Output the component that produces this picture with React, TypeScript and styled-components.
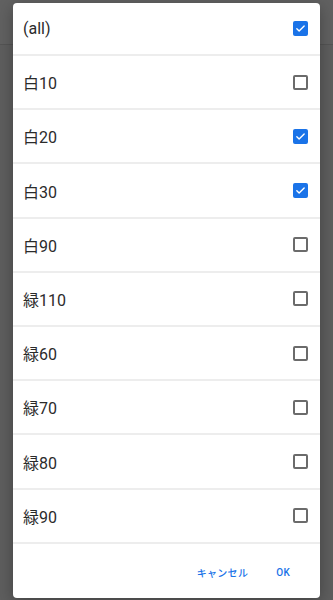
import React, { useState } from "react";
import styled, { createGlobalStyle } from "styled-components";

const GlobalStyle = createGlobalStyle`
  html, body {
    margin: 0;
    padding: 0;
    height: 100%;
    background: #ffffff;
    font-family: Roboto, "Noto Sans CJK JP", sans-serif;
  }
  #root {
    height: 100%;
  }
`;

const Page = styled.div`
  position: relative;
  width: 333px;
  height: 600px;
  overflow: hidden;
  background: #f7f7f7;
`;

const PageHeader = styled.div`
  height: 44px;
  background: #ffffff;
  border-bottom: 1px solid #dddddd;
`;

const Backdrop = styled.div`
  position: absolute;
  inset: 0;
  background: rgba(0, 0, 0, 0.62);
  display: flex;
  align-items: center;
  justify-content: center;
`;

const Dialog = styled.div`
  width: 307px;
  height: 595px;
  background: #ffffff;
  border-radius: 4px;
  box-shadow: 0 4px 16px rgba(0, 0, 0, 0.3);
  display: flex;
  flex-direction: column;
  overflow: hidden;
`;

const List = styled.div`
  display: flex;
  flex-direction: column;
`;

const Row = styled.label<{ $first?: boolean }>`
  box-sizing: border-box;
  height: ${(p) => (p.$first ? "53.6px" : "54.2px")};
  display: flex;
  align-items: center;
  justify-content: space-between;
  padding: ${(p) => (p.$first ? "1px" : "0")} 12px 0 10px;
  border-bottom: 2px solid #ededed;
  font-size: 16px;
  color: #2b2b2b;
  cursor: pointer;
`;

const Box = styled.span<{ $checked: boolean }>`
  box-sizing: border-box;
  width: 15px;
  height: 15px;
  border-radius: 2px;
  display: flex;
  align-items: center;
  justify-content: center;
  background: ${(p) => (p.$checked ? "#1a73e8" : "#ffffff")};
  border: ${(p) => (p.$checked ? "none" : "2px solid #6b6b6b")};
`;

const Footer = styled.div`
  flex: 1;
  display: flex;
  align-items: center;
  justify-content: flex-end;
  gap: 12px;
  padding: 4px 22px 0 0;
`;

const TextButton = styled.button`
  background: none;
  border: none;
  padding: 4px 8px;
  font-family: Roboto, "Noto Sans CJK JP", sans-serif;
  font-size: 10px;
  font-weight: 500;
  color: #1a73e8;
  letter-spacing: 0.3px;
  cursor: pointer;
`;

const items = [
  { label: "(all)", checked: true },
  { label: "白10", checked: false },
  { label: "白20", checked: true },
  { label: "白30", checked: true },
  { label: "白90", checked: false },
  { label: "緑110", checked: false },
  { label: "緑60", checked: false },
  { label: "緑70", checked: false },
  { label: "緑80", checked: false },
  { label: "緑90", checked: false },
];

function Check({ checked }: { checked: boolean }) {
  return (
    <Box $checked={checked}>
      {checked && (
        <svg width="11" height="11" viewBox="0 0 24 24">
          <path
            d="M4 12.5l5 5L20 6.5"
            fill="none"
            stroke="#ffffff"
            strokeWidth="3"
            strokeLinecap="round"
            strokeLinejoin="round"
          />
        </svg>
      )}
    </Box>
  );
}

export default function App() {
  const [state, setState] = useState(items);
  const toggle = (i: number) =>
    setState((s) => s.map((it, j) => (j === i ? { ...it, checked: !it.checked } : it)));

  return (
    <Page>
      <GlobalStyle />
      <PageHeader />
      <Backdrop>
        <Dialog>
          <List>
            {state.map((it, i) => (
              <Row key={it.label} $first={i === 0} onClick={() => toggle(i)}>
                <span>{it.label}</span>
                <Check checked={it.checked} />
              </Row>
            ))}
          </List>
          <Footer>
            <TextButton>キャンセル</TextButton>
            <TextButton>OK</TextButton>
          </Footer>
        </Dialog>
      </Backdrop>
    </Page>
  );
}
